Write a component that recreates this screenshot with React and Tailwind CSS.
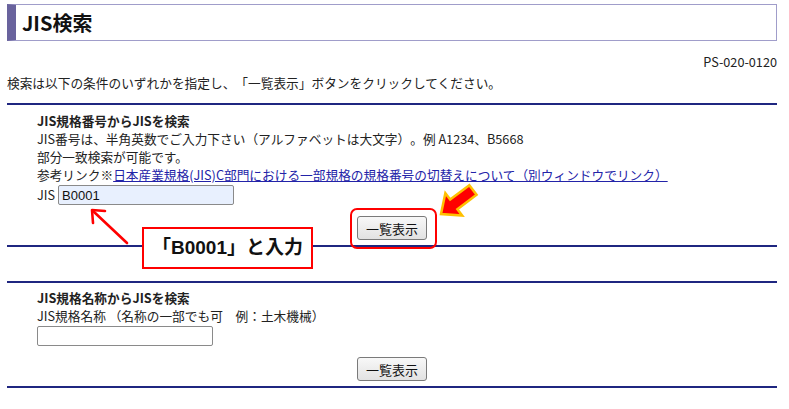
import React from 'react';

const SearchButton = () => (
    <button
        type="button"
        className="h-[24px] w-[70px] rounded-[3px] border border-[#7a7a7a] bg-gradient-to-b from-[#f8f8f8] to-[#e2e2e2] text-[13px] leading-none text-[#111]"
    >
        一覧表示
    </button>
);

const Rule = ({ className = '' }) => <div className={`h-[2px] bg-[#1f2680] ${className}`} />;

export default function App() {
    return (
        <div className="relative h-[409px] w-[789px] overflow-hidden bg-white font-['Noto_Sans_CJK_JP','Noto_Sans',sans-serif] text-[12.7px] text-[#222] [text-spacing-trim:space-all]">
            <div className="px-[7px] pr-[12px] pt-[4px]">
                {/* page title */}
                <div className="flex h-[37px] items-center border-[1.5px] border-l-[9px] border-[#a09dca] border-l-[#69639d] pl-[6px]">
                    <h1 className="text-[20px] font-bold leading-none text-[#111]">JIS検索</h1>
                </div>

                <p className="mt-[12px] text-right leading-[18px]">PS-020-0120</p>
                <p className="mt-[3px] leading-[18px]">
                    検索は以下の条件のいずれかを指定し、「一覧表示」ボタンをクリックしてください。
                </p>

                <Rule className="mt-[11px]" />

                {/* search by number */}
                <div className="pl-[30px] pt-[7px] leading-[18px]">
                    <p className="font-bold">JIS規格番号からJISを検索</p>
                    <p>JIS番号は、半角英数でご入力下さい（アルファベットは大文字）。例 A1234、B5668</p>
                    <p>部分一致検索が可能です。</p>
                    <p>
                        参考リンク※
                        <a href="#" className="text-[#2323a8] underline">
                            日本産業規格(JIS)C部門における一部規格の規格番号の切替えについて（別ウィンドウでリンク）
                        </a>
                    </p>
                    <div className="mt-[1px] flex items-center gap-[3px]">
                        <span>JIS</span>
                        <input
                            readOnly
                            value="B0001"
                            className="h-[20px] w-[176px] rounded-[2px] border border-[#8a8a8a] bg-[#e8f0fe] px-[3px] font-['Liberation_Sans',sans-serif] text-[13px] text-[#111] outline-none"
                        />
                    </div>
                </div>
                <div className="mt-[11px] flex justify-center">
                    <SearchButton />
                </div>
                <Rule className="mt-[5px]" />

                <Rule className="mt-[34px]" />

                {/* search by name */}
                <div className="pl-[30px] pt-[6px] leading-[18px]">
                    <p className="font-bold">JIS規格名称からJISを検索</p>
                    <p>JIS規格名称 （名称の一部でも可　例：土木機械）</p>
                    <input
                        readOnly
                        className="mt-[1px] block h-[20px] w-[176px] rounded-[2px] border border-[#8a8a8a] bg-white px-[3px] outline-none"
                    />
                </div>
                <div className="mt-[11px] flex justify-center">
                    <SearchButton />
                </div>
                <Rule className="mt-[5px]" />
            </div>

            {/* annotations */}
            <div className="absolute left-[350px] top-[208px] h-[41px] w-[87px] rounded-[7px] border-[2.5px] border-[#ff0000]" />

            <div className="absolute left-[142px] top-[227px] flex h-[42px] w-[171px] items-center justify-center border-2 border-[#ff0000] bg-white font-['Liberation_Sans','Noto_Sans_CJK_JP',sans-serif] text-[19px] font-bold text-[#111]">
                「B0001」と入力
            </div>

            <svg className="absolute left-[86px] top-[204px]" width="48" height="44" viewBox="0 0 48 44">
                <path d="M41 39 L7 7" stroke="#ff0000" strokeWidth="2.6" strokeLinecap="round" fill="none" />
                <path d="M7 19 L6 6 L19 7" stroke="#ff0000" strokeWidth="2.6" strokeLinecap="round" strokeLinejoin="round" fill="none" />
            </svg>

            <svg className="absolute left-[428px] top-[176px]" width="56" height="46" viewBox="0 0 56 46">
                <g transform="translate(13 38) rotate(-37)">
                    <polygon
                        points="0,0 16,-14 16,-6 40,-6 40,6 16,6 16,14"
                        fill="#ff0000"
                        stroke="#ffc000"
                        strokeWidth="2.5"
                        strokeLinejoin="miter"
                    />
                </g>
            </svg>
        </div>
    );
}
